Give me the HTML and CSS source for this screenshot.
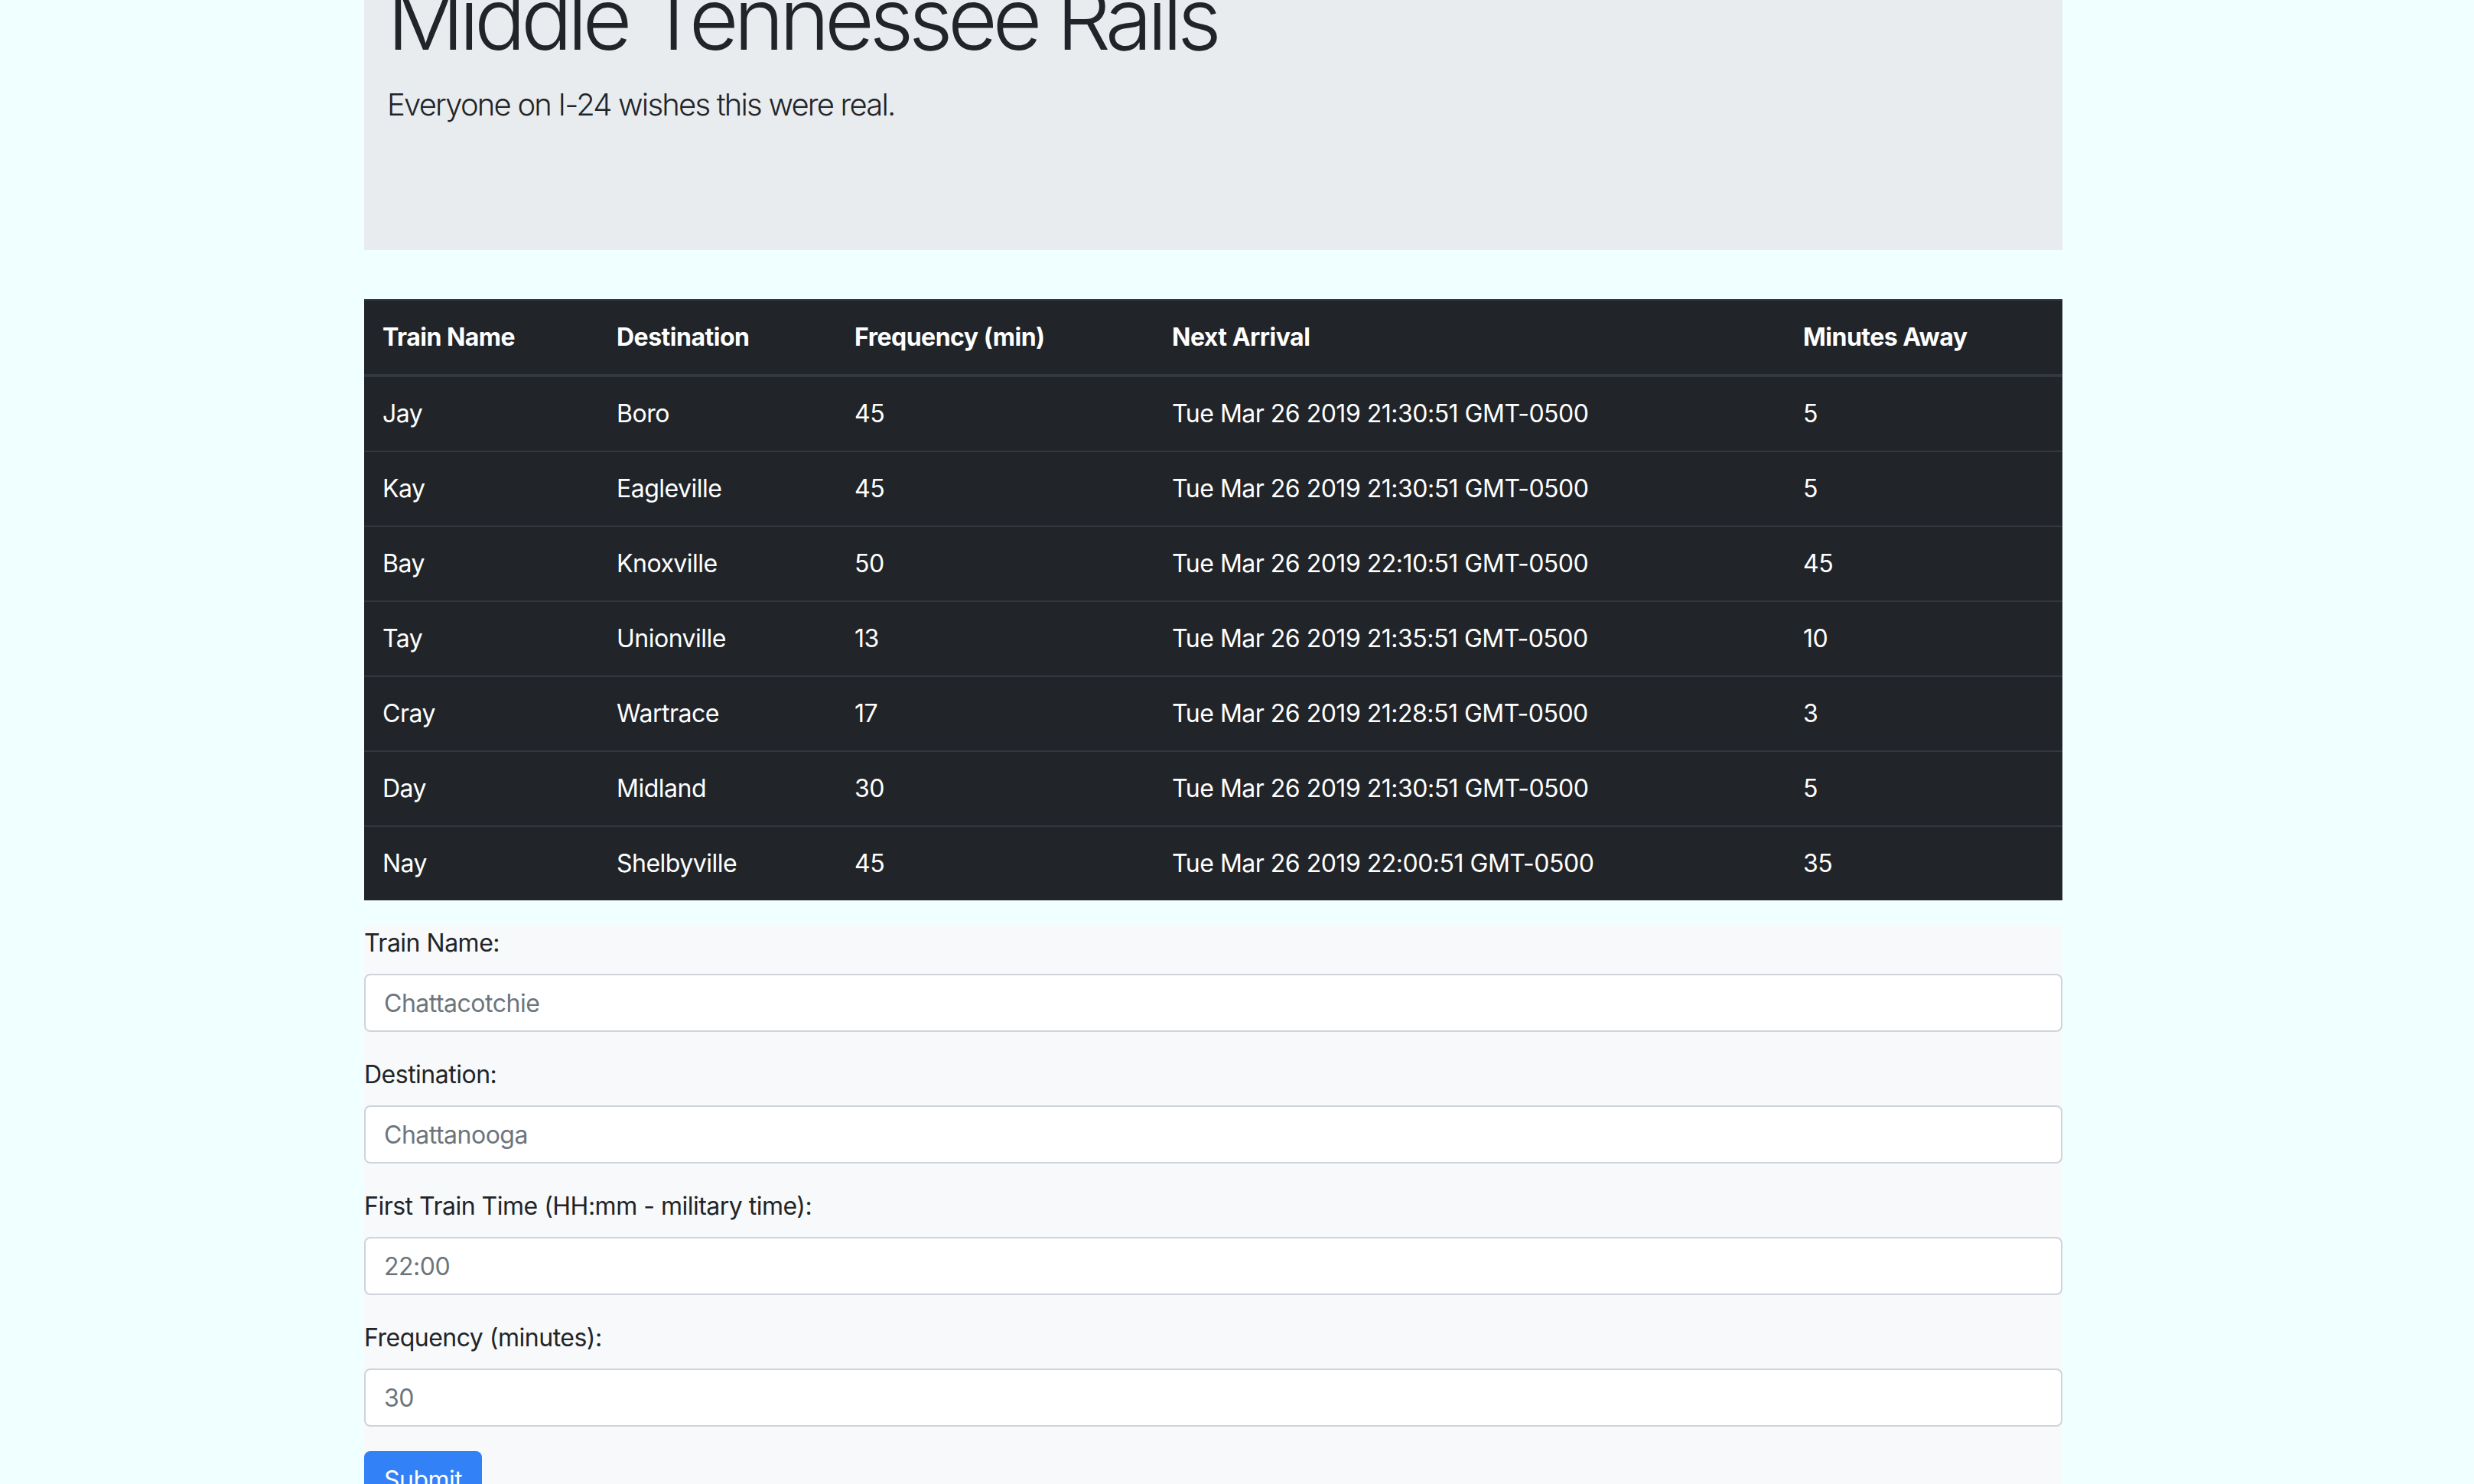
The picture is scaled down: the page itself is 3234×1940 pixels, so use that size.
FILE: index.html
```html
<!DOCTYPE html>
<html lang="en">
<head>
<meta charset="utf-8">
<title>Middle Tennessee Rails</title>
<link rel="stylesheet" href="styles.css">
</head>
<body>
<div class="container">
  <div class="jumbotron">
    <h1 class="display">Middle Tennessee Rails</h1>
    <p class="lead">Everyone on I-24 wishes this were real.</p>
  </div>

  <table class="trains">
    <colgroup>
      <col class="c1"><col class="c2"><col class="c3"><col class="c4"><col class="c5">
    </colgroup>
    <thead>
      <tr><th>Train Name</th><th>Destination</th><th>Frequency (min)</th><th>Next Arrival</th><th>Minutes Away</th></tr>
    </thead>
    <tbody>
      <tr><td>Jay</td><td>Boro</td><td>45</td><td>Tue Mar 26 2019 21:30:51 GMT-0500</td><td>5</td></tr>
      <tr><td>Kay</td><td>Eagleville</td><td>45</td><td>Tue Mar 26 2019 21:30:51 GMT-0500</td><td>5</td></tr>
      <tr><td>Bay</td><td>Knoxville</td><td>50</td><td>Tue Mar 26 2019 22:10:51 GMT-0500</td><td>45</td></tr>
      <tr><td>Tay</td><td>Unionville</td><td>13</td><td>Tue Mar 26 2019 21:35:51 GMT-0500</td><td>10</td></tr>
      <tr><td>Cray</td><td>Wartrace</td><td>17</td><td>Tue Mar 26 2019 21:28:51 GMT-0500</td><td>3</td></tr>
      <tr><td>Day</td><td>Midland</td><td>30</td><td>Tue Mar 26 2019 21:30:51 GMT-0500</td><td>5</td></tr>
      <tr><td>Nay</td><td>Shelbyville</td><td>45</td><td>Tue Mar 26 2019 22:00:51 GMT-0500</td><td>35</td></tr>
    </tbody>
  </table>

  <form class="train-form">
    <div class="form-group">
      <label for="name">Train Name:</label>
      <input id="name" type="text" placeholder="Chattacotchie">
    </div>
    <div class="form-group">
      <label for="dest">Destination:</label>
      <input id="dest" type="text" placeholder="Chattanooga">
    </div>
    <div class="form-group">
      <label for="first">First Train Time (HH:mm - military time):</label>
      <input id="first" type="text" placeholder="22:00">
    </div>
    <div class="form-group">
      <label for="freq">Frequency (minutes):</label>
      <input id="freq" type="text" placeholder="30">
    </div>
    <button type="button" class="btn-primary">Submit</button>
  </form>
</div>
</body>
</html>
```
FILE: styles.css
```css
html, body {
  margin: 0;
  padding: 0;
}
body {
  background: #f0ffff;
  font-family: Inter, "Liberation Sans", sans-serif;
  font-size: 32px;
  line-height: 1.5;
  letter-spacing: -0.5px;
  color: #212529;
  overflow: hidden;
}
.container {
  margin-left: 476px;
  width: 2220px;
}
.jumbotron {
  background: #e9ecef;
  margin-top: -171px;
  margin-bottom: 64px;
  padding: 128px 30px;
}
.display {
  margin: 0 0 16px 0;
  font-size: 112px;
  font-weight: 300;
  line-height: 1.2;
  letter-spacing: -6.5px;
}
.lead {
  margin: 0 0 32px 0;
  font-size: 40px;
  font-weight: 300;
  line-height: 1.5;
  letter-spacing: -1.8px;
}
.trains {
  width: 100%;
  table-layout: fixed;
  border-collapse: collapse;
  background: #212529;
  color: #fff;
  margin-bottom: 32px;
}
.c1 { width: 306px; }
.c2 { width: 311px; }
.c3 { width: 415px; }
.c4 { width: 825px; }
.c5 { width: 363px; }
.trains th,
.trains td {
  padding: 24px;
  text-align: left;
  vertical-align: top;
  border-top: 2px solid #32383e;
  line-height: 48px;
}
.trains th {
  font-weight: 700;
  border-bottom: 4px solid #32383e;
}
.train-form {
  background: #f8f9fa;
  padding-bottom: 80px;
}
.form-group {
  margin-bottom: 32px;
}
.form-group label {
  display: inline-block;
  margin-bottom: 16px;
}
.form-group input {
  display: block;
  box-sizing: border-box;
  width: 100%;
  height: 76px;
  padding: 12px 24px;
  font-family: inherit;
  font-size: 32px;
  line-height: 48px;
  letter-spacing: -0.5px;
  color: #495057;
  background: #fff;
  border: 2px solid #ced4da;
  border-radius: 8px;
  outline: none;
}
.form-group input::placeholder {
  color: #6c757d;
  opacity: 1;
}
.btn-primary {
  font-family: inherit;
  font-size: 32px;
  line-height: 48px;
  letter-spacing: -0.5px;
  padding: 12px 24px;
  color: #fff;
  background: #3381f6;
  border: 2px solid #3381f6;
  border-radius: 8px;
}
```
